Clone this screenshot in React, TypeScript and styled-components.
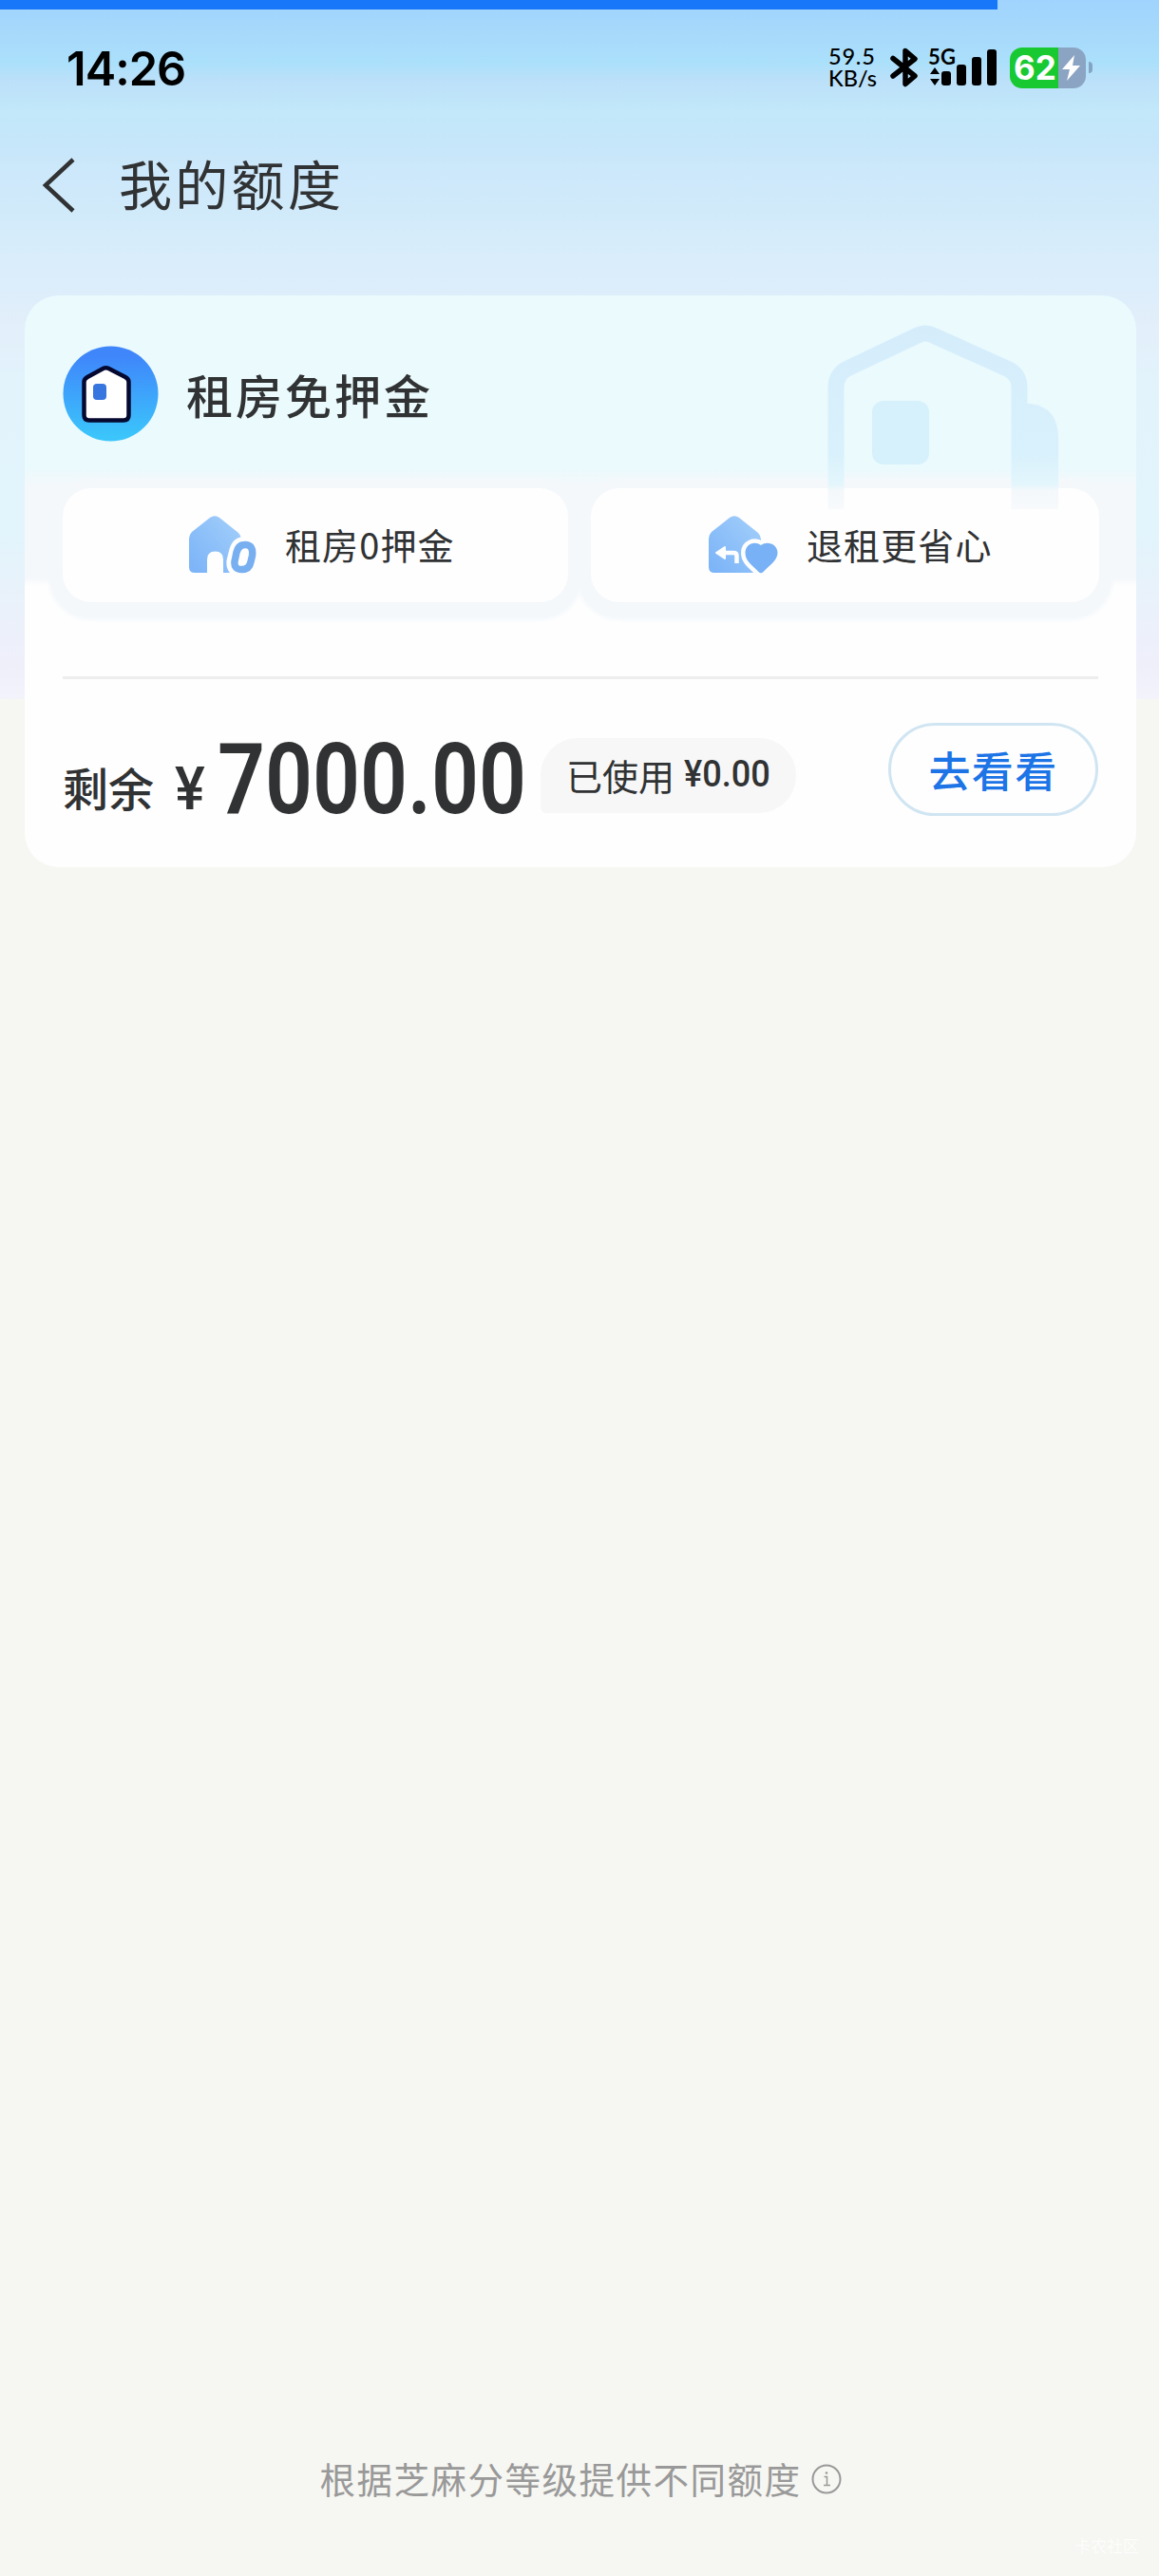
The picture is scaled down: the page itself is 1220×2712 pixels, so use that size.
import React from "react";
import styled, { createGlobalStyle } from "styled-components";

const cjk = `"Noto Sans CJK SC", sans-serif`;

const GlobalStyle = createGlobalStyle`
  * { box-sizing: border-box; }
  body { margin: 0; background: #f6f6f2; }
  svg { display: block; flex: none; overflow: visible; }
`;

const Page = styled.div`
  width: 1220px;
  height: 2712px;
  display: flex;
  flex-direction: column;
  overflow: hidden;
  font-family: ${cjk};
  color: #303233;
  background:
    linear-gradient(
      #a0d4fe 0, #a6d8fb 30px, #abe0fb 66px, #bbe0f9 84px, #c2e8fa 118px,
      #c6e6f9 150px, #cde8fb 180px, #d0eafa 220px, #d9edfb 270px,
      #dcedfb 300px, #e3effa 345px, #e2f3fc 400px, #e2f4fc 560px,
      #eaf1fa 640px, #efeffa 700px, #f3f3fc 736px
    ) top / 100% 736px no-repeat,
    #f6f6f2;
`;

const Progress = styled.div`
  flex: none;
  width: 1050px;
  height: 10px;
  background: #1877f8;
`;

const StatusBar = styled.div`
  flex: none;
  display: flex;
  align-items: center;
  justify-content: space-between;
  height: 122px;
  padding: 0 70px 0 70px;
  color: #000;
`;

const Clock = styled.div`
  padding-top: 2px;
  font: 600 50px/60px Inter, sans-serif;
  letter-spacing: -1px;
  transform: scaleX(0.975);
  transform-origin: left;
`;

const StatusIcons = styled.div`
  display: flex;
  align-items: center;
  height: 44px;
`;

const Speed = styled.div`
  width: 64px;
  font: 500 23.5px/23px Lato, sans-serif;
  white-space: nowrap;
`;

const SpeedValue = styled.div`
  letter-spacing: 0.8px;
`;

const Signal = styled.svg`
  margin-left: 8px;
`;

const Battery = styled.div`
  display: flex;
  align-items: center;
  gap: 3px;
  margin-left: 11px;
`;

const BatteryBody = styled.div`
  display: flex;
  align-items: center;
  justify-content: space-between;
  width: 80px;
  height: 43px;
  padding: 0 5px 0 4px;
  border-radius: 13px;
  background: linear-gradient(90deg, #18c932 51px, #8ca4c3 51px);
  color: #fff;
  font: 700 35px/43px Inter, sans-serif;
`;

const BatteryTip = styled.div`
  width: 4px;
  height: 12px;
  border-radius: 0 5px 5px 0;
  background: #83a5c4;
`;

const Header = styled.header`
  flex: none;
  display: flex;
  align-items: center;
  height: 126px;
  padding-left: 44px;
`;

const HeaderTitle = styled.h1`
  margin: 0 0 7px 43px;
  font: 400 56px/80px ${cjk};
  letter-spacing: 3.3px;
`;

const Card = styled.section`
  position: relative;
  flex: none;
  display: flex;
  flex-direction: column;
  width: 1170px;
  height: 602px;
  margin: 53px 0 0 26px;
  padding: 53px 40px 0;
  border-radius: 36px;
  overflow: hidden;
  background: linear-gradient(#eafafd 0, #eafafd 180px, #f4f8fb 200px, #f5f8fb 298px, #fefefe 306px);
`;

const CardDecor = styled.svg`
  position: absolute;
  z-index: 1;
  left: 840px;
  top: 20px;
`;

const CardHead = styled.div`
  display: flex;
  align-items: center;
  gap: 29px;
  height: 101px;
`;

const CardTitle = styled.h2`
  margin: 0;
  font: 500 49px/70px ${cjk};
  letter-spacing: 3px;
`;

const Features = styled.div`
  display: grid;
  grid-template-columns: 532px 535px;
  gap: 24px;
  margin-top: 49px;
`;

const Feature = styled.div<{ $indent: number }>`
  display: flex;
  align-items: center;
  height: 120px;
  padding: 0 0 0 ${(p) => p.$indent}px;
  border-radius: 30px;
  background: #fefefe;
  box-shadow: 0 4px 4px 15px #f4f8fb;
  font: 400 38px/56px ${cjk};
  letter-spacing: 1.1px;
`;

const FeatureText = styled.span`
  margin: 0 0 3px 27px;
`;

const Divider = styled.div`
  flex: none;
  height: 3px;
  margin-top: 78px;
  background: #ededee;
`;

const QuotaRow = styled.div`
  display: flex;
  align-items: flex-start;
`;

const Remaining = styled.span`
  width: 118px;
  margin-top: 78px;
  font: 500 48px/70px ${cjk};
`;

const Condensed = styled.span<{ $size: number; $scale: number; $width: number; $top: number; $weight?: number }>`
  width: ${(p) => p.$width}px;
  margin-top: ${(p) => p.$top}px;
  font: ${(p) => p.$weight ?? 600} ${(p) => p.$size}px/1 Roboto, sans-serif;
  white-space: nowrap;
  transform: scaleX(${(p) => p.$scale});
  transform-origin: left;
`;

const UsedPill = styled.div`
  display: flex;
  width: 269px;
  height: 79px;
  margin-top: 62px;
  padding-left: 27px;
  border-radius: 39px 39px 39px 6px;
  background: #f7f7f7;
  font: 400 38px/79px ${cjk};
`;

const UsedLabel = styled.span`
  width: 124px;
  margin-top: -1px;
`;

const GoButton = styled.button`
  width: 221px;
  height: 98px;
  margin: 46px 0 0 auto;
  padding: 0;
  border: 3px solid #d0e5f2;
  border-radius: 49px;
  background: transparent;
  color: #1c74e6;
  font: 500 44px/92px ${cjk};
  letter-spacing: 1.4px;
`;

const Footer = styled.footer`
  display: flex;
  align-items: center;
  justify-content: center;
  gap: 10px;
  height: 60px;
  margin-top: auto;
  padding-left: 2px;
  color: #999;
  font: 400 37.5px/60px ${cjk};
  letter-spacing: 1.5px;
`;

const FooterText = styled.span`
  margin-bottom: 3px;
`;

const Watermark = styled.div`
  height: 24px;
  margin: 28px 21px 20px 0;
  text-align: right;
  color: #fdfdfc;
  font: 400 17px/24px ${cjk};
`;

const BackIcon = () => (
  <svg width="38" height="60" viewBox="0 0 38 60" fill="none" stroke="#303233" strokeWidth="4.5">
    <path d="M33 3 4 30 33 57" />
  </svg>
);

const BluetoothIcon = () => (
  <svg width="32" height="44" viewBox="0 0 32 44" fill="none" stroke="#000" strokeWidth="5.5" strokeLinecap="round" strokeLinejoin="round">
    <path d="M4 12.500 27 31 17 39.500V4.500L27 13 4 31" />
  </svg>
);

const SignalIcon = () => (
  <Signal width="76" height="44" viewBox="0 0 76 44">
    <text x="1" y="19" fontFamily="Lato, sans-serif" fontWeight="700" fontSize="22" textLength="29">5G</text>
    <path d="M8 22 13 29H3zM8 41 13 34H3z" />
    <rect x="15" y="26" width="10" height="15" rx="3" />
    <rect x="31" y="19" width="10" height="22" rx="3" />
    <rect x="47" y="11" width="10" height="30" rx="3" />
    <rect x="63" y="3" width="10" height="38" rx="3" />
  </Signal>
);

const BoltIcon = () => (
  <svg width="21" height="27" viewBox="0 0 21 27" fill="#fff">
    <path d="M14 0 1 15H9L6 27 20 11H12z" />
  </svg>
);

const HouseBadge = () => (
  <svg width="101" height="101" viewBox="0 0 101 101">
    <defs>
      <linearGradient id="badge" x1="0" y1="0" x2="0" y2="1">
        <stop offset="0.1" stopColor="#3f86fb" />
        <stop offset="0.95" stopColor="#3bc5fb" />
      </linearGradient>
    </defs>
    <circle cx="50.5" cy="50.5" r="50" fill="url(#badge)" />
    <path d="M43 23.800Q45.500 22.500 48 23.800L66 33Q69.500 35 69.500 38V73Q69.500 78.500 64 78.500H28Q22.500 78.500 22.500 73V38Q22.500 35 26 33Z" fill="#fff" stroke="#05082f" strokeWidth="4.5" strokeLinejoin="round" />
    <rect x="32" y="40" width="14" height="17" rx="4" fill="#3775df" />
  </svg>
);

const FeatureGradient = ({ id }: { id: string }) => (
  <defs>
    <linearGradient id={id} gradientUnits="userSpaceOnUse" x1="62" y1="5" x2="5" y2="55">
      <stop offset="0" stopColor="#a5d0fa" />
      <stop offset="1" stopColor="#7db5f8" />
    </linearGradient>
  </defs>
);

const housePath = "M22 2Q27 -1.500 32 2L52 18Q55 21 55 25V60H6Q0 60 0 54V24Q0 20 3 17Z";

const ZeroHouseIcon = () => (
  <svg width="74" height="62" viewBox="0 0 74 62">
    <FeatureGradient id="zeroHouse" />
    <path d={housePath} fill="url(#zeroHouse)" />
    <path d="M19 62V46Q19 37.500 27.500 37.500T36 46V62Z" fill="#fefefe" />
    <path d="M59 30Q68 30 66 42L65 49Q63 57 55 57Q46.500 57 47.500 48L50 38Q52 30 59 30Z" fill="#fefefe" stroke="#fefefe" strokeWidth="16" />
    <path d="M59 30.500Q68 30.500 66.500 42L65 48.500Q63.500 56.500 55.500 56.500Q47 56.500 48 48L50 38.500Q52 30.500 59 30.500Z" fill="none" stroke="#78aff0" strokeWidth="7.500" />
  </svg>
);

const HeartHouseIcon = () => (
  <svg width="76" height="62" viewBox="0 0 76 62">
    <FeatureGradient id="heartHouse" />
    <path d={housePath} fill="url(#heartHouse)" />
    <path d="M13 39H26Q29.500 39 29.500 42V50" fill="none" stroke="#fefefe" strokeWidth="4.500" strokeLinejoin="round" />
    <path d="M8 39 17 33V45Z" fill="#fefefe" stroke="#fefefe" strokeWidth="2" strokeLinejoin="round" />
    <path d="M55 31C48 26 38.500 30 38.500 39C38.500 48 46 52 52.500 59Q55 61.500 57.500 59C64 52 72.500 47 72.500 39C72.500 30 62 26 55 31Z" fill="#78b1f5" stroke="#fefefe" strokeWidth="9" paintOrder="stroke" />
  </svg>
);

const InfoIcon = () => (
  <svg width="32" height="32" viewBox="0 0 32 32" fill="none" stroke="#999" strokeWidth="2">
    <circle cx="16" cy="16" r="14.500" />
    <path d="M13.500 13.500H16.500V22M13 22.500H20" strokeWidth="1.500" />
    <circle cx="16" cy="9.500" r="1.300" fill="#999" stroke="none" />
  </svg>
);

const HouseDecor = () => (
  <CardDecor width="260" height="210" viewBox="866 331 260 210">
    <defs>
      <linearGradient id="decor" gradientUnits="userSpaceOnUse" x1="0" y1="340" x2="0" y2="538">
        <stop offset="0" stopColor="#d5edfb" />
        <stop offset="0.7" stopColor="#d9f1fc" />
        <stop offset="0.86" stopColor="#e3f6fc" />
        <stop offset="0.89" stopColor="#f4f8fb" />
        <stop offset="1" stopColor="#f8fafc" />
      </linearGradient>
    </defs>
    <path d="M1080 425H1084Q1114 428 1114 462V536H1080Z" fill="url(#decor)" />
    <path d="M880 536V408Q880 394 892 388L966 353Q974 349 982 353L1060 388Q1073 394 1073 408V536" fill="none" stroke="url(#decor)" strokeWidth="17" />
    <rect x="918" y="422" width="60" height="67" rx="12" fill="#d6f1fb" />
  </CardDecor>
);

export default function App() {
  return (
    <>
      <GlobalStyle />
      <Page>
        <Progress />
        <StatusBar>
          <Clock>14:26</Clock>
          <StatusIcons>
            <Speed>
              <SpeedValue>59.5</SpeedValue>
              <div>KB/s</div>
            </Speed>
            <BluetoothIcon />
            <SignalIcon />
            <Battery>
              <BatteryBody>
                62
                <BoltIcon />
              </BatteryBody>
              <BatteryTip />
            </Battery>
          </StatusIcons>
        </StatusBar>
        <Header>
          <BackIcon />
          <HeaderTitle>我的额度</HeaderTitle>
        </Header>
        <Card>
          <HouseDecor />
          <CardHead>
            <HouseBadge />
            <CardTitle>租房免押金</CardTitle>
          </CardHead>
          <Features>
            <Feature $indent={133}>
              <ZeroHouseIcon />
              <FeatureText>租房0押金</FeatureText>
            </Feature>
            <Feature $indent={124}>
              <HeartHouseIcon />
              <FeatureText>退租更省心</FeatureText>
            </Feature>
          </Features>
          <Divider />
          <QuotaRow>
            <Remaining>剩余</Remaining>
            <Condensed $size={63} $scale={0.95} $width={45} $top={84} $weight={500}>¥</Condensed>
            <Condensed $size={103} $scale={0.85} $width={340} $top={54}>7000.00</Condensed>
            <UsedPill>
              <UsedLabel>已使用</UsedLabel>
              <Condensed $size={38} $scale={0.95} $width={100} $top={19} $weight={500}>¥0.00</Condensed>
            </UsedPill>
            <GoButton>去看看</GoButton>
          </QuotaRow>
        </Card>
        <Footer>
          <FooterText>根据芝麻分等级提供不同额度</FooterText>
          <InfoIcon />
        </Footer>
        <Watermark>卡农社区</Watermark>
      </Page>
    </>
  );
}
